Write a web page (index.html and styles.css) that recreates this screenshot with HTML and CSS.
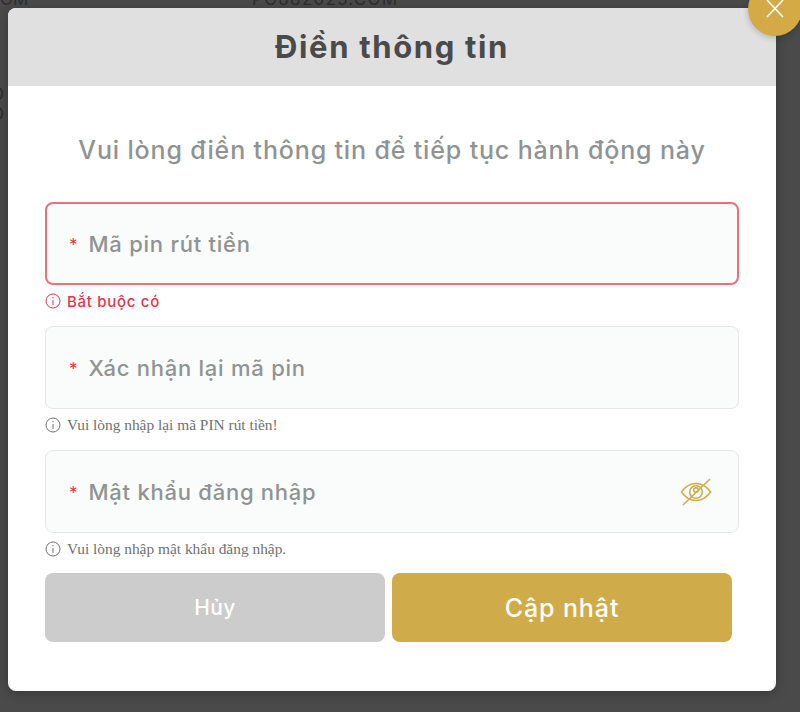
FILE: index.html
```html
<!DOCTYPE html>
<html lang="vi">
<head>
<meta charset="utf-8">
<title>Điền thông tin</title>
<link rel="stylesheet" href="styles.css">
</head>
<body>
<div class="backdrop">
  <span class="bg-text bg-m">OM</span>
  <span class="bg-text bg-site">PG882025.COM</span>
  <span class="bg-text bg-o1">O</span>
  <span class="bg-text bg-o2">O</span>
</div>
<div class="modal">
  <button class="close" aria-label="Đóng">
    <svg width="20" height="20" viewBox="0 0 20 20"><path d="M2 1 L18 18 M18 1 L2 18" stroke="#fff" stroke-width="1.6" fill="none"/></svg>
  </button>
  <header class="modal-head"><h1>Điền thông tin</h1></header>
  <div class="modal-body">
    <p class="subtitle">Vui lòng điền thông tin để tiếp tục hành động này</p>
    <div class="field field-error"><span class="req">*</span><span class="ph">Mã pin rút tiền</span></div>
    <div class="hint hint-error">
      <svg class="info" viewBox="0 0 16 16"><circle cx="8" cy="8" r="7" fill="none" stroke="currentColor" stroke-width="1"/><path d="M8 7v5M8 4v1.4" stroke="currentColor" stroke-width="1" fill="none"/></svg>
      <span>Bắt buộc có</span>
    </div>
    <div class="field"><span class="req">*</span><span class="ph">Xác nhận lại mã pin</span></div>
    <div class="hint">
      <svg class="info" viewBox="0 0 16 16"><circle cx="8" cy="8" r="7" fill="none" stroke="currentColor" stroke-width="1"/><path d="M8 7v5M8 4v1.4" stroke="currentColor" stroke-width="1" fill="none"/></svg>
      <span>Vui lòng nhập lại mã PIN rút tiền!</span>
    </div>
    <div class="field"><span class="req">*</span><span class="ph">Mật khẩu đăng nhập</span>
      <svg class="eye" width="32" height="28" viewBox="0 0 32 28" fill="none" stroke="#d0ab49" stroke-width="1.5">
        <path d="M1.5 14 C6 7.5 11 5.5 16 5.5 C21 5.5 26 7.5 30.5 14 C26 20.5 21 22.5 16 22.5 C11 22.5 6 20.5 1.5 14 Z"/>
        <circle cx="16" cy="14" r="6.3"/>
        <circle cx="16" cy="12" r="2.3"/>
        <path d="M3 27 L30 1"/>
      </svg>
    </div>
    <div class="hint hint-last">
      <svg class="info" viewBox="0 0 16 16"><circle cx="8" cy="8" r="7" fill="none" stroke="currentColor" stroke-width="1"/><path d="M8 7v5M8 4v1.4" stroke="currentColor" stroke-width="1" fill="none"/></svg>
      <span>Vui lòng nhập mật khẩu đăng nhập.</span>
    </div>
    <div class="actions">
      <button class="btn btn-cancel">Hủy</button>
      <button class="btn btn-submit">Cập nhật</button>
    </div>
  </div>
</div>
</body>
</html>
```

FILE: styles.css
```css
* { box-sizing: border-box; }
html, body { margin: 0; height: 100%; }
body {
  width: 800px;
  height: 712px;
  overflow: hidden;
  position: relative;
  background: #4a4a4a;
  font-family: "Inter", "Noto Sans", sans-serif;
}
.backdrop { position: absolute; inset: 0; }
.bg-text { position: absolute; color: #2e2e2e; font-size: 17px; line-height: 20px; font-family: "Inter", sans-serif; }
.bg-m { left: 0; top: -11px; }
.bg-site { left: 252px; top: -11px; letter-spacing: 1.3px; }
.bg-o1 { left: -9px; top: 84px; }
.bg-o2 { left: -9px; top: 104px; }
.modal {
  position: absolute;
  left: 8px;
  top: 8px;
  width: 768px;
  height: 683px;
  background: #fff;
  border-radius: 8px;
  box-shadow: 0 2px 12px rgba(0,0,0,.25);
}
.close {
  position: absolute;
  right: -26px;
  top: -26px;
  width: 54px;
  height: 54px;
  padding: 0;
  border: 0;
  border-radius: 50%;
  background: #d3aa45;
  display: flex;
  align-items: center;
  justify-content: center;
  box-shadow: 0 2px 6px rgba(0,0,0,.2);
  z-index: 2;
}
.modal-head {
  height: 78px;
  padding-bottom: 2px;
  background: #e0e0e0;
  border-radius: 8px 8px 0 0;
  display: flex;
  align-items: center;
  justify-content: center;
}
.modal-head h1 {
  margin: 0;
  font-size: 31px;
  font-weight: 700;
  color: #4a4a4a;
  letter-spacing: 1.65px;
}
.modal-body { padding: 48px 37px 0; }
.subtitle {
  margin: 0 0 36px;
  height: 32px;
  line-height: 32px;
  font-size: 25px;
  font-weight: 500;
  color: #909393;
  text-align: center;
  white-space: nowrap;
  letter-spacing: .85px;
}
.field {
  height: 82.5px;
  width: 694px;
  padding-top: 2px;
  background: #fafbfb;
  border: 1px solid #e6e8e8;
  border-radius: 8px;
  display: flex;
  align-items: center;
  padding-left: 23px;
}
.field-error { border: 2px solid #e4737b; padding-left: 22px; }
.req { color: #e5354b; font-size: 17px; width: 19.5px; position: relative; top: 1px; }
.ph { font-size: 22px; font-weight: 500; color: #909393; letter-spacing: .75px; }
.eye { margin-left: auto; margin-right: 26px; }
.hint {
  height: 41.5px;
  display: flex;
  align-items: center;
  gap: 6px;
  padding-bottom: 8px;
  font-family: "Liberation Serif", serif;
  font-size: 15.4px;
  color: #6f7272;
}
.hint-last { height: 40.5px; padding-bottom: 7px; }
.hint-error {
  color: #e5354b;
  font-family: "Inter", sans-serif;
  font-size: 15px;
  font-weight: 500;
  letter-spacing: .7px;
}
.info { width: 16px; height: 16px; flex: none; }
.actions { display: flex; gap: 7px; width: 687px; }
.btn {
  flex: 1;
  height: 69px;
  border: 0;
  border-radius: 8px;
  color: #fff;
  font-family: "Inter", sans-serif;
  font-weight: 500;
}
.btn-cancel { background: #cccccc; font-size: 21px; letter-spacing: .4px; }
.btn-submit { background: #d0ab49; font-size: 25px; letter-spacing: .9px; }
```
